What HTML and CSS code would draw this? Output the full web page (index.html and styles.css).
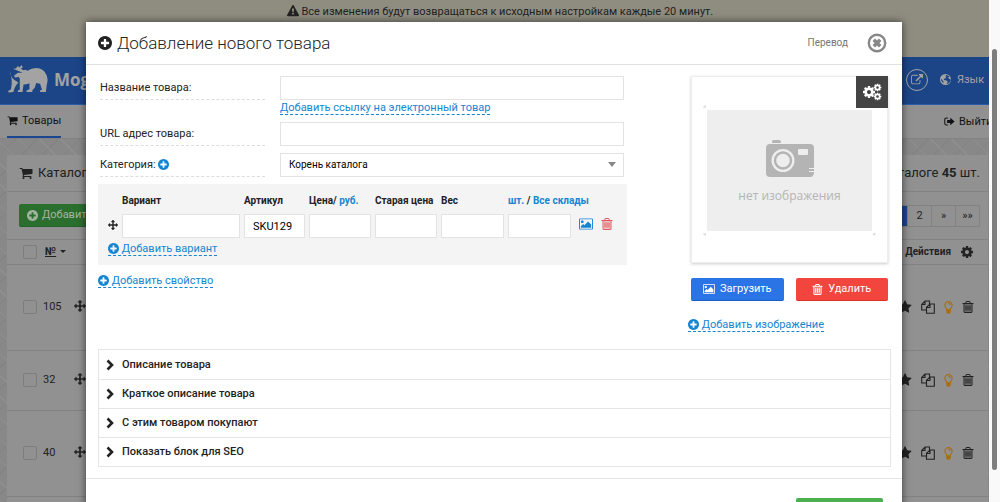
FILE: index.html
```html
<!DOCTYPE html>
<html lang="ru">
<head>
<meta charset="utf-8">
<title>Добавление нового товара</title>
<link rel="stylesheet" href="styles.css">
</head>
<body>
<svg class="sprite" aria-hidden="true">
  <symbol id="plus" viewBox="128 128 1536 1536"><path d="M1344 960v-128q0-26-19-45t-45-19h-256v-256q0-26-19-45t-45-19h-128q-26 0-45 19t-19 45v256h-256q-26 0-45 19t-19 45v128q0 26 19 45t45 19h256v256q0 26 19 45t45 19h128q26 0 45-19t19-45v-256h256q26 0 45-19t19-45zm320-64q0 209-103 385.5t-279.5 279.5-385.5 103-385.5-103-279.5-279.5-103-385.5 103-385.5 279.5-279.5 385.5-103 385.5 103 279.5 279.5 103 385.5z"/></symbol>
  <symbol id="warning" viewBox="0 0 1792 1792"><path d="M1024 1375v-190q0-14-9.5-23.5t-22.5-9.5h-192q-13 0-22.5 9.5t-9.5 23.5v190q0 14 9.5 23.5t22.5 9.5h192q13 0 22.5-9.5t9.5-23.5zm-2-374l18-459q0-12-10-19-13-11-24-11h-220q-11 0-24 11-10 7-10 21l17 457q0 10 10 16.5t24 6.5h185q14 0 23.5-6.5t10.5-16.5zm-14-934l768 1408q35 63-2 126-17 29-46.5 46t-63.5 17h-1536q-34 0-63.5-17t-46.5-46q-37-63-2-126l768-1408q17-31 47-49t65-18 65 18 47 49z"/></symbol>
  <symbol id="cart" viewBox="0 0 1792 1792"><path d="M704 1536q0 52-38 90t-90 38-90-38-38-90 38-90 90-38 90 38 38 90zm896 0q0 52-38 90t-90 38-90-38-38-90 38-90 90-38 90 38 38 90zm128-1088v512q0 24-16.5 42.5t-40.5 21.5l-1044 122q13 60 13 70 0 16-24 64h920q26 0 45 19t19 45-19 45-45 19h-1024q-26 0-45-19t-19-45q0-11 8-31.5t16-36 21.5-40 15.5-29.5l-177-823h-204q-26 0-45-19t-19-45 19-45 45-19h256q16 0 28.5 6.5t19.5 15.5 13 24.5 8 26 5.5 29.5 4.5 26h1201q26 0 45 19t19 45z"/></symbol>
  <symbol id="trash" viewBox="128 128 1536 1536"><path d="M448 512h896v1020H448z" opacity=".35"/><path d="M704 736v576q0 14-9 23t-23 9h-64q-14 0-23-9t-9-23v-576q0-14 9-23t23-9h64q14 0 23 9t9 23zm256 0v576q0 14-9 23t-23 9h-64q-14 0-23-9t-9-23v-576q0-14 9-23t23-9h64q14 0 23 9t9 23zm256 0v576q0 14-9 23t-23 9h-64q-14 0-23-9t-9-23v-576q0-14 9-23t23-9h64q14 0 23 9t9 23zm128 724v-948h-896v948q0 22 7 40.5t14.5 27 10.5 8.5h832q3 0 10.5-8.5t14.5-27 7-40.500zm-672-1076h448l-48-117q-7-9-17-11h-317q-10 2-17 11zm928 32v64q0 14-9 23t-23 9h-96v948q0 83-47 143.5t-113 60.5h-832q-66 0-113-58.5t-47-141.5v-952h-96q-14 0-23-9t-9-23v-64q0-14 9-23t23-9h309l70-167q15-37 54-63t79-26h320q40 0 79 26t54 63l70 167h309q14 0 23 9t9 23z"/></symbol>
  <symbol id="picture" viewBox="-64 0 1920 1792"><path d="M576 576q0 80-56 136t-136 56-136-56-56-136 56-136 136-56 136 56 56 136zm1024 384v448h-1408v-192l320-320 160 160 512-512zm96-704h-1600q-13 0-22.5 9.5t-9.5 22.5v1216q0 13 9.5 22.5t22.5 9.5h1600q13 0 22.5-9.5t9.5-22.5v-1216q0-13-9.5-22.5t-22.5-9.5zm160 32v1216q0 66-47 113t-113 47h-1600q-66 0-113-47t-47-113v-1216q0-66 47-113t113-47h1600q66 0 113 47t47 113z"/></symbol>
  <symbol id="move" viewBox="0 0 1792 1792"><path d="M1792 896q0 26-19 45l-256 256q-19 19-45 19t-45-19-19-45v-128h-384v384h128q26 0 45 19t19 45-19 45l-256 256q-19 19-45 19t-45-19l-256-256q-19-19-19-45t19-45 45-19h128v-384h-384v128q0 26-19 45t-45 19-45-19l-256-256q-19-19-19-45t19-45l256-256q19-19 45-19t45 19 19 45v128h384v-384h-128q-26 0-45-19t-19-45 19-45l256-256q19-19 45-19t45 19l256 256q19 19 19 45t-19 45-45 19h-128v384h384v-128q0-26 19-45t45-19 45 19l256 256q19 19 19 45z"/></symbol>
  <symbol id="cog" viewBox="0 0 1792 1792"><path d="M1152 896q0-106-75-181t-181-75-181 75-75 181 75 181 181 75 181-75 75-181zm512-109v222q0 12-8 23t-20 13l-185 28q-19 54-39 91 35 50 107 138 10 12 10 25t-9 23q-27 37-99 108t-94 71q-12 0-26-9l-138-108q-44 23-91 38-16 136-29 186-7 28-36 28h-222q-14 0-24.5-8.5t-11.5-21.5l-28-184q-49-16-90-37l-141 107q-10 9-25 9-14 0-25-11-126-114-165-168-7-10-7-23 0-12 8-23 15-21 51-66.5t54-70.5q-27-50-41-99l-183-27q-13-2-21-12.5t-8-23.5v-222q0-12 8-23t19-13l186-28q14-46 39-92-40-57-107-138-10-12-10-24 0-10 9-23 26-36 98.5-107.5t94.5-71.5q13 0 26 10l138 107q44-23 91-38 16-136 29-186 7-28 36-28h222q14 0 24.5 8.5t11.5 21.5l28 184q49 16 90 37l142-107q9-9 24-9 13 0 25 10 129 119 165 170 7 8 7 22 0 12-8 23-15 21-51 66.5t-54 70.5q26 50 41 98l183 28q13 2 21 12.5t8 23.5z"/></symbol>
  <symbol id="cogs" viewBox="0 0 20 18"><use href="#cog" x="0" y="2" width="14" height="14"/><use href="#cog" x="11" y="0" width="9" height="9"/><use href="#cog" x="11" y="9" width="9" height="9"/></symbol>
  <symbol id="external" viewBox="0 0 1792 1792"><path d="M1408 928v320q0 119-84.5 203.5t-203.5 84.5h-832q-119 0-203.5-84.5t-84.5-203.5v-832q0-119 84.5-203.5t203.5-84.5h704q14 0 23 9t9 23v64q0 14-9 23t-23 9h-704q-66 0-113 47t-47 113v832q0 66 47 113t113 47h832q66 0 113-47t47-113v-320q0-14 9-23t23-9h64q14 0 23 9t9 23zm384-864v512q0 26-19 45t-45 19-45-19l-176-176-652 652q-10 10-23 10t-23-10l-114-114q-10-10-10-23t10-23l652-652-176-176q-19-19-19-45t19-45 45-19h512q26 0 45 19t19 45z"/></symbol>
  <symbol id="star" viewBox="0 0 1792 1792"><path d="M1728 647q0 22-26 48l-363 354 86 500q1 7 1 20 0 21-10.5 35.5t-30.5 14.5q-19 0-40-12l-449-236-449 236q-22 12-40 12-21 0-31.5-14.5t-10.5-35.5q0-6 2-20l86-500-364-354q-25-27-25-48 0-37 56-46l502-73 225-455q19-41 49-41t49 41l225 455 502 73q56 9 56 46z"/></symbol>
  <symbol id="copy" viewBox="0 0 14 14"><path d="M5.500 10H.7V4.500L4 1h4.500v3M.7 4.500H4V1M5.500 13.300v-6L9 4h4.300v9.300zM5.500 7.500H9V4" fill="none" stroke="currentColor" stroke-width="1.100"/></symbol>
  <symbol id="bulb" viewBox="0 0 10 14"><path d="M3 9.500C3 7.500 1 7 1 4.500a4 4 0 0 1 8 0C9 7 7 7.500 7 9.500zM5 2.500q1.700 0 2 1.700" fill="none" stroke="currentColor" stroke-width="1.300"/><path d="M2.500 9.500h5v3L6 14H4l-1.500-1.500z"/></symbol>
  <symbol id="globe" viewBox="1 1 12 12"><path fill-rule="evenodd" d="M7 1a6 6 0 1 1 0 12A6 6 0 0 1 7 1zM8 2L6.500 3.500 8 4l-1 1.500L5 6.500l.5 1L8 8l1.500 1.500L8 12c3-.4 4.600-2.500 4.700-5L10.500 6 10 4.500l1.500-1zM2 6c-.1 2 1 4 3 5l-.5-2.500L3 7z"/></symbol>
  <symbol id="exit" viewBox="0 0 14 12"><path d="M5 1.500H3Q1 1.500 1 3.500v5q0 2 2 2h2" fill="none" stroke="currentColor" stroke-width="1.300"/><path d="M4 4.200h4V1.300L13.500 6 8 10.700V7.800H4z"/></symbol>
  <symbol id="chevron" viewBox="0 0 8 12"><path d="M1.500 1.500L6 6l-4.500 4.500" fill="none" stroke="currentColor" stroke-width="2.600"/></symbol>
  <symbol id="close" viewBox="0 0 20 20"><circle cx="10" cy="10" r="8.200" fill="none" stroke="currentColor" stroke-width="2.400"/><path d="M6.800 6.800l6.400 6.400M13.200 6.800l-6.400 6.400" stroke="currentColor" stroke-width="3.600"/></symbol>
  <symbol id="bear" viewBox="0 0 42 30"><path d="M2.500 6Q3 14 11.500 18Q7 23 6.500 28l-5 .5-.5-1.500 3-2Q6 15 2.500 6z"/><path d="M6 4l3-.5L11 1l1.500 1.500L15 0l1 2.500L14 4l3 1.500 2-.5 2 1Q25 3 30 3q8 0 11 8 1.500 5 0 9l-1 8h-6v-1.500l2-1-2-6-4-1-1.500 5L26 26v2h-6v-1.500l3-1.500v-6q-3 1.500-6 1L16 26v2h-5v-1.500l2-1V14l-1-1.500-4 .5-1-2 4-3 5 0-5-2z"/></symbol>
  <symbol id="camera" viewBox="0 0 48 38"><path fill-rule="evenodd" d="M7 0h6q2 0 2 3H6q0-3 1-3zM4 4h40q4 0 4 4v20h-5v1h5v2h-5v1h5q0 5-4 5H4q-4 0-4-4V8q0-4 4-4zM33 9q-1 0-1 1v4q0 1 1 1h8q1 0 1-1v-4q0-1-1-1zM17 9a11.500 11.500 0 1 0 0 23 11.500 11.500 0 0 0 0-23z"/><circle cx="17" cy="20.500" r="8" fill="none" stroke="currentColor" stroke-width="2.400"/></symbol>
</svg>

<div class="window">
  <div class="app">
    <div class="banner"><svg class="i12"><use href="#warning"/></svg> Все изменения будут возвращаться к исходным настройкам каждые 20 минут.</div>
    <header class="topbar">
      <a class="brand" href="#"><svg class="bear"><use href="#bear"/></svg>Moguta</a>
      <div class="topbar-end">
        <a class="round" href="#" aria-label="Открыть сайт"><svg class="i12"><use href="#external"/></svg></a>
        <button class="lang" type="button"><svg class="i11"><use href="#globe"/></svg>Язык <span class="caret"></span></button>
      </div>
    </header>
    <nav class="nav">
      <a class="tab" href="#"><svg class="i11"><use href="#cart"/></svg>Товары</a>
      <a class="exit" href="#"><svg class="i11"><use href="#exit"/></svg>Выйти</a>
    </nav>
    <main class="card">
      <div class="card-head">
        <span class="card-title"><svg class="i14"><use href="#cart"/></svg>Каталог</span>
        <span>Всего в каталоге <b>45</b> шт.</span>
      </div>
      <div class="toolbar">
        <button class="add" type="button"><svg class="i11"><use href="#plus"/></svg>Добавить</button>
        <div class="pages"><a class="on" href="#">1</a><a href="#">2</a><a href="#">»</a><a href="#">»»</a></div>
      </div>
      <table class="goods">
        <thead>
          <tr><th class="c-check"><input type="checkbox" aria-label="Выбрать все"></th><th class="c-num"><a href="#">№</a> <span class="caret"></span></th><th></th><th><span class="acts head">Действия <svg class="i14"><use href="#cog"/></svg></span></th></tr>
        </thead>
        <tbody>
          <tr class="r-tall"><td><input type="checkbox" aria-label="105"></td><td>105</td><td><svg class="i12"><use href="#move"/></svg></td><td><span class="acts"><svg class="i14"><use href="#star"/></svg><svg class="i14"><use href="#copy"/></svg><svg class="bulb"><use href="#bulb"/></svg><svg class="i12"><use href="#trash"/></svg></span></td></tr>
          <tr class="r-short"><td><input type="checkbox" aria-label="32"></td><td>32</td><td><svg class="i12"><use href="#move"/></svg></td><td><span class="acts"><svg class="i14"><use href="#star"/></svg><svg class="i14"><use href="#copy"/></svg><svg class="bulb"><use href="#bulb"/></svg><svg class="i12"><use href="#trash"/></svg></span></td></tr>
          <tr class="r-tall"><td><input type="checkbox" aria-label="40"></td><td>40</td><td><svg class="i12"><use href="#move"/></svg></td><td><span class="acts"><svg class="i14"><use href="#star"/></svg><svg class="i14"><use href="#copy"/></svg><svg class="bulb"><use href="#bulb"/></svg><svg class="i12"><use href="#trash"/></svg></span></td></tr>
          <tr class="r-short"><td></td><td></td><td></td><td></td></tr>
        </tbody>
      </table>
    </main>

    <div class="overlay">
      <section class="modal" role="dialog" aria-labelledby="modal-title">
        <div class="modal-head">
          <svg class="i14"><use href="#plus"/></svg>
          <h1 id="modal-title">Добавление нового товара</h1>
          <button class="translate" type="button">Перевод</button>
          <button class="close" type="button" aria-label="Закрыть"><svg><use href="#close"/></svg></button>
        </div>
        <div class="modal-body">
          <div class="columns">
            <div class="left">
              <div class="fields">
                <div class="field">
                  <label for="name">Название товара:</label>
                  <div class="control"><input class="box" id="name" type="text"><a class="dashed" href="#">Добавить ссылку на электронный товар</a></div>
                </div>
                <div class="field">
                  <label for="url">URL адрес товара:</label>
                  <div class="control"><input class="box" id="url" type="text"></div>
                </div>
                <div class="field">
                  <label for="cat">Категория: <svg class="i11 blue"><use href="#plus"/></svg></label>
                  <div class="control select"><select class="box" id="cat"><option>Корень каталога</option></select></div>
                </div>
              </div>
              <div class="variants">
                <div class="grid">
                  <span></span>
                  <label for="v1">Вариант</label><label for="v2">Артикул</label><label for="v3">Цена/ <a href="#">руб.</a></label><label for="v4">Старая цена</label><label for="v5">Вес</label><label class="wide" for="v6"><a href="#">шт.</a> / <a href="#">Все склады</a></label>
                  <svg class="handle"><use href="#move"/></svg>
                  <input class="box" id="v1" type="text"><input class="box" id="v2" type="text" value="SKU129"><input class="box" id="v3" type="text"><input class="box" id="v4" type="text"><input class="box" id="v5" type="text"><input class="box" id="v6" type="text">
                  <button class="icon blue" type="button" aria-label="Изображение"><svg class="i14"><use href="#picture"/></svg></button>
                  <button class="icon red" type="button" aria-label="Удалить"><svg class="i12"><use href="#trash"/></svg></button>
                </div>
                <a class="dashed add-variant" href="#"><svg class="i11"><use href="#plus"/></svg> Добавить вариант</a>
              </div>
              <a class="dashed add-prop" href="#"><svg class="i11"><use href="#plus"/></svg> Добавить свойство</a>
            </div>
            <div class="right">
              <div class="photo">
                <div class="frame"><div class="empty"><svg class="camera"><use href="#camera"/></svg>нет изображения</div></div>
                <button class="gear" type="button" aria-label="Настройки"><svg><use href="#cogs"/></svg></button>
              </div>
              <div class="photo-buttons">
                <button class="upload" type="button"><svg class="i12"><use href="#picture"/></svg>Загрузить</button>
                <button class="delete" type="button"><svg class="i11"><use href="#trash"/></svg>Удалить</button>
              </div>
              <a class="dashed" href="#"><svg class="i11"><use href="#plus"/></svg> Добавить изображение</a>
            </div>
          </div>
          <div class="accordion">
            <button type="button"><svg><use href="#chevron"/></svg>Описание товара</button>
            <button type="button"><svg><use href="#chevron"/></svg>Краткое описание товара</button>
            <button type="button"><svg><use href="#chevron"/></svg>С этим товаром покупают</button>
            <button type="button"><svg><use href="#chevron"/></svg>Показать блок для SEO</button>
          </div>
        </div>
        <div class="modal-foot"><button class="save" type="button" aria-label="Сохранить"></button></div>
      </section>
    </div>
  </div>
  <div class="scrollbar"><div class="thumb"></div></div>
</div>
</body>
</html>
```

FILE: styles.css
```css
* { box-sizing: border-box; }
body { margin: 0; font-family: Roboto, "Noto Sans", sans-serif; font-size: 11px; line-height: 14px; color: #222; }
a { color: inherit; text-decoration: none; }
button { margin: 0; padding: 0; border: 0; background: none; font: inherit; color: inherit; cursor: pointer; }
svg { fill: currentColor; flex: none; }
.sprite { position: absolute; width: 0; height: 0; }
.i11 { width: 11px; height: 11px; vertical-align: -2px; }
.i12 { width: 12px; height: 12px; vertical-align: -2px; }
.i14 { width: 14px; height: 14px; vertical-align: -3px; }
.blue { color: #1585d2; }
.red { color: #e05a5f; }

.window { display: flex; height: 100vh; overflow: hidden; }
.app { position: relative; flex: 1; min-width: 0; overflow: hidden; background-color: #888;
  background-image: repeating-linear-gradient(45deg, transparent 0 14px, #8f8f8f 14px 15px), repeating-linear-gradient(-45deg, transparent 0 14px, #838383 14px 15px); }
.scrollbar { width: 11px; padding: 49px 3px 32px; background: #f9f9f9; display: flex; }
.thumb { flex: 1; border-radius: 3px; background: #7d7d7d; }

.banner { height: 57px; padding: 5px 0 0 11px; text-align: center; background: #8f8d80; }
.topbar { display: flex; justify-content: space-between; align-items: center; height: 48px; padding: 0 0 2px 7px; background: #1c4587; border-bottom: 1px solid #2a5cae; color: #a3a3a3; }
.brand { display: flex; align-items: center; gap: 6px; font: 700 17px/24px "Open Sans", sans-serif; }
.bear { width: 41px; height: 29px; }
.topbar-end { display: flex; align-items: center; gap: 12px; white-space: nowrap; width: 83px; }
.round { display: flex; align-items: center; justify-content: center; flex: none; width: 22px; height: 22px; border: 1px solid; border-radius: 50%; }
.lang { display: flex; align-items: center; gap: 6px; }
.caret { display: inline-block; border: 3px solid transparent; border-top-color: currentColor; border-bottom: 0; vertical-align: 2px; }
.nav { display: flex; justify-content: space-between; height: 34px; padding-left: 7px; background: #919191; border-bottom: 1px solid #838383; color: #111; }
.tab, .exit { display: flex; align-items: center; gap: 4px; }
.tab { border-bottom: 2px solid #1c4690; }
.exit { width: 45px; white-space: nowrap; }

.card { margin: 16px 1px 0 7px; background: #919191; }
.card-head { display: flex; justify-content: space-between; align-items: center; height: 37px; padding: 0 8px 0 12px; border-bottom: 1px solid #828282; font-size: 13px; }
.card-title { display: flex; gap: 5px; align-items: center; }
.toolbar { display: flex; justify-content: space-between; align-items: center; height: 48px; padding: 0 8px 0 12px; border-bottom: 1px solid #828282; }
.add { display: flex; align-items: center; gap: 4px; height: 23px; padding: 0 8px; border-radius: 2px; background: #2b6f2e; color: #a5b3a5; border-bottom: 1px solid #245f27; }
.pages { display: flex; border: 1px solid #828282; }
.pages a { min-width: 24px; line-height: 20px; text-align: center; border-left: 1px solid #828282; }
.pages .on { background: #1c4690; color: #a3a9b3; }
.goods { width: 100%; border-collapse: collapse; table-layout: fixed; }
.goods th, .goods td { padding: 0; border-bottom: 1px solid #828282; text-align: left; }
.goods th { height: 24px; }
.goods th:nth-child(1) { width: 36px; }
.goods th:nth-child(2) { width: 31px; white-space: nowrap; }
.goods th:nth-child(3) { width: 60px; }
.goods th a { text-decoration: underline; }
.goods td:first-child, .goods .c-check { padding-left: 16px; }
.goods .c-num { padding-left: 2px; }
.goods .caret { margin-left: 1px; }
.goods input { appearance: none; display: block; width: 14px; height: 14px; margin: 0; border: 1px solid #7d7d7d; border-radius: 2px; }
.r-tall td { height: 86px; }
.r-short td { height: 60px; }
.acts { display: flex; justify-content: flex-end; align-items: center; gap: 9px; padding-right: 14px; }
.head { font-size: 10px; }
.bulb { width: 9px; height: 13px; color: #a66f12; }

.overlay { position: absolute; inset: 22px 1px 0 0; display: flex; justify-content: center; padding: 0 80px; }
.modal { width: 100%; max-width: 816px; height: max-content; background: #fff; box-shadow: 0 0 8px rgba(0, 0, 0, .6); }
.modal-head { display: flex; align-items: center; gap: 5px; height: 43px; padding: 0 15px 0 12px; border-bottom: 1px solid #e2e2e2; }
.modal-head h1 { flex: 1; margin: 0; font-size: 17px; line-height: 24px; font-weight: 300; }
.translate { color: #777; font-size: 10px; }
.close { width: 20px; height: 20px; margin-left: 14px; color: #888; }
.close svg { display: block; width: 20px; height: 20px; }
.modal-body { padding: 11px 11px 11px 12px; }
.columns { display: flex; justify-content: space-between; height: 273px; }
.left { width: 529px; }
.right { width: 203px; }
.fields { display: grid; gap: 7px; padding: 0 3px 0 2px; }
.field { display: flex; align-items: flex-start; gap: 15px; }
.field > label { width: 165px; height: 24px; line-height: 23px; border-bottom: 1px dashed #ddd; }
.control { flex: 1; }
.box { display: block; width: 100%; height: 24px; margin: 0; padding: 0 8px; border: 1px solid #e3e3e3; border-radius: 0; background: #fff; font: inherit; color: #000; outline: 0; }
select.box { appearance: none; font-size: 10px; }
.select { position: relative; }
.select::after { content: ""; position: absolute; right: 8px; top: 9px; border: 4px solid transparent; border-top: 5px solid #888; border-bottom: 0; pointer-events: none; }
.dashed { display: inline-block; color: #1585d2; border-bottom: 1px dashed; line-height: 13px; }
.control .dashed { margin-top: 2px; line-height: 12px; vertical-align: top; }
.variants { margin-top: 7px; padding: 9px 10px 0; height: 81px; background: #f4f4f4; }
.grid { display: grid; grid-template-columns: 10px 118px 61px 62px 62px 63px 63px 18px 16px; column-gap: 4px; align-items: center; }
.grid label { font-size: 10px; line-height: 16px; font-weight: 700; white-space: nowrap; }
.grid label a { color: #1585d2; }
.grid .wide { grid-column: span 3; }
.grid .box { margin-top: 5px; }
.handle { width: 10px; height: 10px; margin-top: 3px; }
.icon { display: flex; justify-content: flex-end; }
.add-variant { margin-top: 4px; }
.add-prop { margin-top: 9px; }
.photo { position: relative; margin: 0 3px; height: 187px; padding: 28px 11px 26px; border: 1px solid #eee; box-shadow: 0 1px 3px rgba(0, 0, 0, .2); }
.frame { height: 100%; padding: 5px 4px; border-radius: 4px; --dot: linear-gradient(#e2e2e2, #e2e2e2);
  background: var(--dot) 0 0 / 3px 3px no-repeat, var(--dot) 100% 0 / 3px 3px no-repeat, var(--dot) 0 100% / 3px 3px no-repeat, var(--dot) 100% 100% / 3px 3px no-repeat; }
.empty { display: flex; flex-direction: column; align-items: center; height: 100%; padding-top: 30px; background: #eee; color: #b4b4b4; font: 12px/18px "Open Sans", sans-serif; gap: 9px; }
.camera { width: 48px; height: 38px; }
.gear { position: absolute; top: -1px; right: -1px; display: grid; place-items: center; width: 32px; height: 32px; background: #444; color: #fff; }
.gear svg { width: 20px; height: 18px; }
.photo-buttons { display: flex; gap: 12px; margin: 15px 3px 17px; }
.photo-buttons button { flex: 1; display: flex; justify-content: center; align-items: center; gap: 5px; height: 23px; border-radius: 2px; color: #fff; }
.upload { background: #2b74e6; border-bottom: 1px solid #1b5cc4; }
.delete { background: #f2453d; border-bottom: 1px solid #d9302a; }
.accordion { border: 1px solid #e5e5e5; }
.accordion button { display: flex; align-items: center; gap: 8px; width: 100%; height: 29px; padding-left: 7px; font-weight: 500; }
.accordion button + button { border-top: 1px solid #e5e5e5; }
.accordion svg { width: 8px; height: 12px; }
.modal-foot { display: flex; justify-content: flex-end; padding: 19px; border-top: 1px solid #e5e5e5; }
.save { width: 87px; height: 24px; border-radius: 2px; background: #4caf50; color: #fff; }
```
